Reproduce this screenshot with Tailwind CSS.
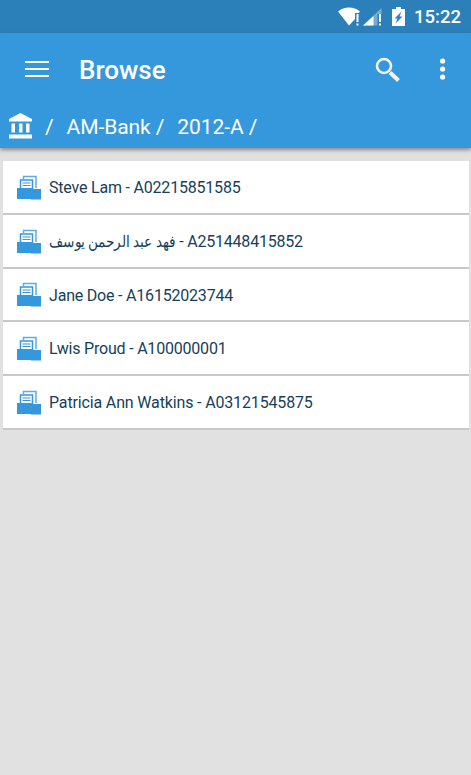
<!DOCTYPE html>
<html lang="en">
<head>
  <meta charset="UTF-8">
  <meta name="viewport" content="width=device-width, initial-scale=1">
  <title>Browse</title>
  <script src="https://cdn.jsdelivr.net/npm/@tailwindcss/browser@4"></script>
</head>
<body class="h-screen overflow-hidden flex flex-col bg-[#e1e1e1] font-['Roboto','Noto_Sans',sans-serif]">

  <!-- STATUS BAR -->
  <div class="h-[33px] shrink-0 bg-[#2c80b9] flex items-center justify-end pr-[10px] text-white">
    <svg class="w-[22px] h-[20px]" viewBox="0 0 22 20">
      <path d="M0 4.500C6-.800 16-.800 22 4.500L20.500 6H17V12L11 18.500z" fill="#fff"/>
      <path d="M18.500 7h2v8h-2zM18.500 16.500h2v2h-2z" fill="#fff"/>
    </svg>
    <svg class="w-[20px] h-[20px] ml-[3px]" viewBox="0 0 20 20">
      <path d="M18.500 1v6h-4v11.500H0z" fill="#fff" fill-opacity=".35"/>
      <path d="M10.500 9v9.500H0z" fill="#fff"/>
      <path d="M16 7h2v8h-2zM16 16.500h2v2h-2z" fill="#fff"/>
    </svg>
    <svg class="w-[13px] h-[19px] ml-[9px] -mt-px" viewBox="0 0 13 19">
      <path d="M4 0h5v2h4v17H0V2h4z" fill="#fff"/>
      <path d="M9.500 4.500L2.500 11.500h3L3.500 16.500l7-7H7.500z" fill="#2c80b9"/>
    </svg>
    <span class="ml-[9px] text-[18.500px] leading-none font-medium mt-[2px]">15:22</span>
  </div>

  <!-- TOOLBAR -->
  <header class="relative h-[115px] shrink-0 bg-[#3598dc] text-white shadow-[0_2px_4px_rgba(0,0,0,0.4)]">
    <div class="h-[72px] flex items-center pl-[25px] pr-[25px]">
      <svg class="w-[24px] h-[18px] -mt-px" viewBox="0 0 24 18" fill="#fff">
        <path d="M0 1h24v2H0zM0 8h24v2H0zM0 15h24v2H0z"/>
      </svg>
      <h1 class="ml-[30px] mt-[2px] text-[26px] leading-none font-medium">Browse</h1>
      <svg class="ml-auto mt-[2px] w-[26px] h-[26px]" viewBox="0 0 26 26" fill="none" stroke="#f2f2f2">
        <circle cx="9" cy="9" r="7" stroke-width="2.600"/>
        <path d="M15 15.500L23.500 23.500" stroke-width="4"/>
      </svg>
      <svg class="ml-[39px] w-[6px] h-[22px]" viewBox="0 0 6 22" fill="#fff">
        <circle cx="2.600" cy="3" r="2.600"/>
        <circle cx="2.600" cy="11" r="2.600"/>
        <circle cx="2.600" cy="19" r="2.600"/>
      </svg>
    </div>
    <nav class="h-[43px] flex items-center pl-[9px] text-[21px] leading-none whitespace-pre tracking-[-0.08px]">
      <svg class="w-[23px] h-[26px] -mt-[2px]" viewBox="0 0 23 26" fill="#fff">
        <path d="M11.500 0L23 6v2.500H0V6zM2.500 10.500H6v9H2.500zM10 10.500h3.500v9H10zM17 10.500h3.500v9H17zM0 21.500h23V25.500H0z"/>
      </svg>
      <span class="ml-[13px] mt-px">/</span>
      <span class="ml-[13px] mt-px">AM-Bank /</span>
      <span class="ml-[13px] mt-px">2012-A /</span>
    </nav>
  </header>

  <svg class="hidden">
    <symbol id="folder" viewBox="0 0 24 25">
      <path d="M6.500 4V1.500h12.500V13" fill="none" stroke="#5dace2" stroke-width="1.500"/>
      <path d="M3.500 14V5h12v9" fill="#fff" stroke="#3598dc" stroke-width="1.500"/>
      <path d="M5.500 8h8M5.500 10.500h8" stroke="#3598dc" stroke-width="1.200"/>
      <path d="M0 13h14.500l1.500 1h8V24.500H14l-1-.500H0z" fill="#3598dc"/>
    </symbol>
  </svg>

  <!-- ACCOUNTS -->
  <ul class="mt-[13px] ml-[3px] mr-[2px] text-[16px] leading-none tracking-[-0.2px] text-[#173f5b]">
    <li class="h-[53.800px] pl-[14px] pt-px flex items-center bg-white border-b-2 border-[#c8c8c8]">
      <svg class="w-[24px] h-[25px]"><use href="#folder"/></svg>
      <span class="ml-[8px] mt-[2px]">Steve Lam - A02215851585</span>
    </li>
    <li class="h-[53.800px] pl-[14px] pt-px flex items-center bg-white border-b-2 border-[#c8c8c8]">
      <svg class="w-[24px] h-[25px]"><use href="#folder"/></svg>
      <span class="ml-[8px] mt-[2px]"><bdi class="inline-block origin-left scale-x-[0.85] mr-[-22.500px] tracking-normal">فهد عبد الرحمن يوسف</bdi> - A251448415852</span>
    </li>
    <li class="h-[53.800px] pl-[14px] pt-px flex items-center bg-white border-b-2 border-[#c8c8c8]">
      <svg class="w-[24px] h-[25px]"><use href="#folder"/></svg>
      <span class="ml-[8px] mt-[2px]">Jane Doe - A16152023744</span>
    </li>
    <li class="h-[53.800px] pl-[14px] flex items-center bg-white border-b-2 border-[#c8c8c8]">
      <svg class="w-[24px] h-[25px]"><use href="#folder"/></svg>
      <span class="ml-[8px] mt-px">Lwis Proud - A100000001</span>
    </li>
    <li class="h-[53.800px] pl-[14px] flex items-center bg-white border-b-2 border-[#c8c8c8]">
      <svg class="w-[24px] h-[25px]"><use href="#folder"/></svg>
      <span class="ml-[8px] mt-px tracking-[-0.15px]">Patricia Ann Watkins - A03121545875</span>
    </li>
  </ul>

</body>
</html>
